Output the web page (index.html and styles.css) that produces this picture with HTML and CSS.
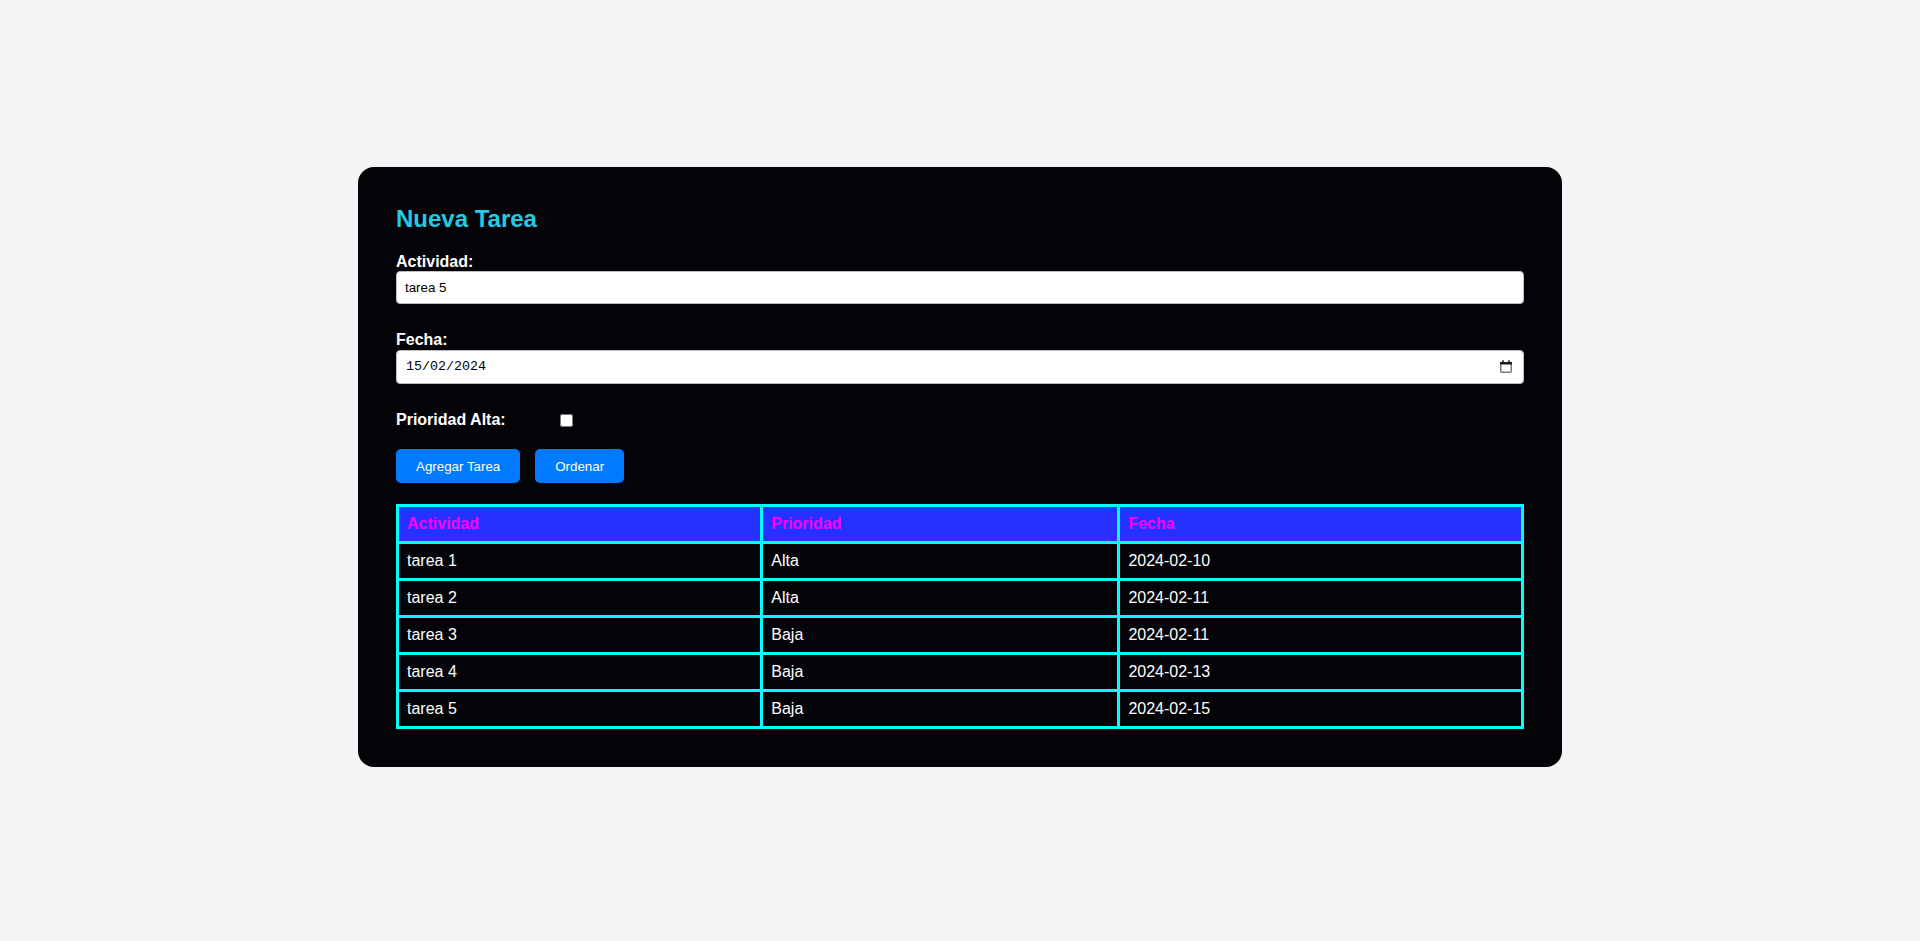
FILE: index.html
```html
<!DOCTYPE html>
<html lang="es">
<head>
<meta charset="utf-8">
<title>Nueva Tarea</title>
<link rel="stylesheet" href="styles.css">
</head>
<body>
<div class="card">
  <h2 class="title">Nueva Tarea</h2>
  <div class="group">
    <label class="label">Actividad:</label>
    <input class="field" type="text" value="tarea 5">
  </div>
  <div class="group">
    <label class="label">Fecha:</label>
    <div class="field date-field">
      <span class="date-text">15/02/2024</span>
      <svg class="cal-icon" width="12" height="13" viewBox="0 0 12 13" aria-hidden="true">
        <rect x="0.75" y="2.75" width="10.5" height="9.5" rx="1" fill="none" stroke="#7a7a7a" stroke-width="1.5"/>
        <rect x="0" y="2" width="12" height="2.5" fill="#1a1a1a"/>
        <rect x="2.2" y="0.3" width="1.6" height="2.2" fill="#1a1a1a"/>
        <rect x="8.2" y="0.3" width="1.6" height="2.2" fill="#1a1a1a"/>
      </svg>
    </div>
  </div>
  <div class="group group-check">
    <label class="label label-inline">Prioridad Alta:</label>
    <input class="check" type="checkbox">
  </div>
  <div class="buttons">
    <button class="btn">Agregar Tarea</button>
    <button class="btn">Ordenar</button>
  </div>
  <table class="tasks">
    <thead>
      <tr><th>Actividad</th><th>Prioridad</th><th>Fecha</th></tr>
    </thead>
    <tbody>
      <tr><td>tarea 1</td><td>Alta</td><td>2024-02-10</td></tr>
      <tr><td>tarea 2</td><td>Alta</td><td>2024-02-11</td></tr>
      <tr><td>tarea 3</td><td>Baja</td><td>2024-02-11</td></tr>
      <tr><td>tarea 4</td><td>Baja</td><td>2024-02-13</td></tr>
      <tr><td>tarea 5</td><td>Baja</td><td>2024-02-15</td></tr>
    </tbody>
  </table>
</div>
</body>
</html>
```

FILE: styles.css
```css
html, body {
  margin: 0;
  padding: 0;
}
body {
  background: #f4f4f4;
  font-family: "Liberation Sans", Arial, sans-serif;
  font-size: 16px;
  padding-top: 167px;
}
.card {
  box-sizing: border-box;
  width: 1204px;
  margin: 0 auto;
  padding: 38px;
  background: #030308;
  border-radius: 16px;
  color: #ffffff;
}
.title {
  margin: 0 0 20px 0;
  font-size: 24px;
  line-height: 28px;
  font-weight: bold;
  color: #22cbe2;
}
.group {
  margin-bottom: 27px;
}
.group-check {
  display: flex;
  align-items: center;
  margin-bottom: 20px;
}
.label {
  display: block;
  font-weight: bold;
  font-size: 16px;
  line-height: 18.4px;
}
.label-inline {
  display: inline-block;
  width: 160px;
}
.field {
  display: block;
  box-sizing: border-box;
  width: 100%;
  height: 33px;
  margin: 0;
  padding: 0 8px;
  border: 1px solid #bdbdbd;
  border-radius: 4px;
  background: #ffffff;
  color: #000000;
  font-family: "Liberation Sans", Arial, sans-serif;
  font-size: 13.33px;
}
.date-field {
  display: flex;
  align-items: center;
  justify-content: space-between;
  height: 34px;
  padding: 0 11px 0 9px;
}
.date-text {
  font-family: "Liberation Mono", "DejaVu Sans Mono", monospace;
  font-size: 13.33px;
  color: #000000;
}
.cal-icon {
  display: block;
}
.check {
  width: 13px;
  height: 13px;
  margin: 0 0 0 4px;
}
.buttons {
  display: flex;
  gap: 15px;
  margin-bottom: 21px;
}
.btn {
  height: 34px;
  padding: 0 20px;
  border: none;
  border-radius: 5px;
  background: #007bff;
  color: #ffffff;
  font-family: "Liberation Sans", Arial, sans-serif;
  font-size: 13.33px;
}
.tasks {
  width: 100%;
  border-collapse: collapse;
  border: 3px solid #00ffff;
}
.tasks th,
.tasks td {
  border: 3px solid #00ffff;
  padding: 8px;
  text-align: left;
  font-size: 16px;
  line-height: 18px;
}
.tasks th {
  background: #2431ff;
  color: #ff00ff;
  font-weight: bold;
}
.tasks td {
  color: #ffffff;
}
```
